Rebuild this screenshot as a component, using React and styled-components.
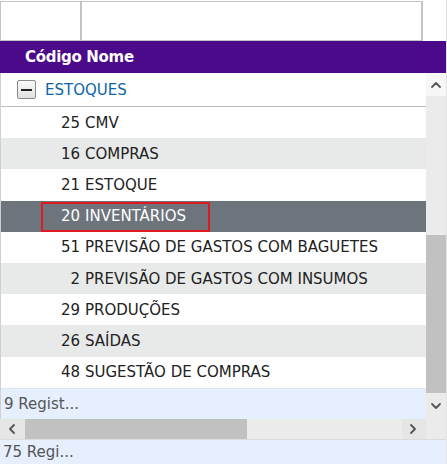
import React from "react";
import styled, { createGlobalStyle } from "styled-components";

const Global = createGlobalStyle`
  html, body { margin: 0; padding: 0; background: #fff; }
  body { font-family: "DejaVu Sans", "Liberation Sans", sans-serif; }
`;

const Grid = styled.div`
  width: 447px;
  height: 464px;
  display: flex;
  flex-direction: column;
  overflow: hidden;
  box-sizing: border-box;
  border-right: 1px solid #e2e2e2;
`;

const FilterRow = styled.div`
  height: 41px;
  flex: none;
  display: flex;
  box-sizing: border-box;
  padding-top: 1px;
`;

const FilterCell = styled.div`
  width: ${(p) => p.$w}px;
  box-sizing: border-box;
  border: 1px solid #c4c4c4;
  border-left: ${(p) => (p.$first ? "1px solid #c4c4c4" : "none")};
  border-right-width: 2px;
  background: #fff;
`;

const ColumnBar = styled.div`
  height: 32px;
  flex: none;
  background: #4a0a8a;
  color: #fff;
  display: flex;
  align-items: center;
  padding-left: 25px;
  font-size: 15px;
  font-weight: 600;
  letter-spacing: -0.3px;
`;

const Body = styled.div`
  height: 346px;
  flex: none;
  display: flex;
`;

const Main = styled.div`
  flex: 1;
  display: flex;
  flex-direction: column;
  border-left: 1px solid #d0d0d0;
`;

const GroupRow = styled.div`
  height: 34px;
  flex: none;
  display: flex;
  align-items: center;
  padding-left: 16px;
  gap: 9px;
  border-bottom: 1px solid #bdbdbd;
  box-sizing: border-box;
  color: #0d66a6;
  font-size: 15px;
`;

const Toggle = styled.span`
  width: 19px;
  height: 19px;
  box-sizing: border-box;
  border: 1px solid #8a8a8a;
  border-radius: 2px;
  background: linear-gradient(#fafafa, #e0e0e0);
  display: flex;
  align-items: center;
  justify-content: center;
  &::after {
    content: "";
    width: 11px;
    height: 2px;
    background: #222;
  }
`;

const Row = styled.div`
  height: 31.2px;
  flex: none;
  display: flex;
  align-items: center;
  font-size: 15px;
  color: ${(p) => (p.$selected ? "#fff" : "#222")};
  background: ${(p) => (p.$selected ? "#6d747c" : p.$alt ? "#e8e9e9" : "#fff")};
  position: relative;
`;

const Focus = styled.span`
  position: absolute;
  left: 40px;
  top: 1px;
  width: 169px;
  bottom: 0;
  border: 2px solid #e01a22;
  box-sizing: border-box;
  pointer-events: none;
`;

const Code = styled.span`
  width: 79px;
  text-align: right;
  box-sizing: border-box;
`;

const Name = styled.span`
  padding-left: 5px;
  white-space: nowrap;
`;

const Summary = styled.div`
  height: 32px;
  flex: none;
  background: #e6effd;
  color: #555;
  font-size: 15px;
  display: flex;
  align-items: center;
  padding-left: 3px;
  margin-top: auto;
  border-top: 1px solid #dfe6ef;
  box-sizing: border-box;
`;

const VScroll = styled.div`
  width: 20px;
  flex: none;
  display: flex;
  flex-direction: column;
  background: #ebebeb;
`;

const ArrowBtn = styled.div`
  height: ${(p) => p.$h}px;
  width: ${(p) => p.$w || 20}px;
  flex: none;
  display: flex;
  align-items: center;
  justify-content: center;
  background: ${(p) => p.$bg || "#ebebeb"};
`;

const Track = styled.div`
  flex: 1;
  display: flex;
  flex-direction: column;
`;

const Thumb = styled.div`
  background: #c1c1c1;
`;

const HScroll = styled.div`
  height: 20px;
  flex: none;
  display: flex;
  background: #ececec;
  border-bottom: 1px solid #dcdcdc;
`;

const HTrack = styled.div`
  flex: 1;
  display: flex;
`;

const Total = styled.div`
  flex: 1;
  background: #e6effd;
  color: #555;
  font-size: 15px;
  display: flex;
  align-items: center;
  padding-left: 3px;
`;

const Chevron = ({ dir }) => {
  const pts = {
    up: "2,7 6,3 10,7",
    down: "2,3 6,7 10,3",
    left: "7,1 3,5 7,9",
    right: "3,1 7,5 3,9",
  }[dir];
  return (
    <svg width="12" height="10" viewBox="0 0 12 10" style={{ overflow: "visible" }}>
      <polyline points={pts} fill="none" stroke="#555" strokeWidth="1.8" strokeLinecap="round" strokeLinejoin="round" />
    </svg>
  );
};

const items = [
  ["25", "CMV"],
  ["16", "COMPRAS"],
  ["21", "ESTOQUE"],
  ["20", "INVENTÁRIOS"],
  ["51", "PREVISÃO DE GASTOS COM BAGUETES"],
  ["2", "PREVISÃO DE GASTOS COM INSUMOS"],
  ["29", "PRODUÇÕES"],
  ["26", "SAÍDAS"],
  ["48", "SUGESTÃO DE COMPRAS"],
];

export default function App() {
  return (
    <>
      <Global />
      <Grid>
        <FilterRow>
          <FilterCell $w={82} $first />
          <FilterCell $w={341} />
        </FilterRow>
        <ColumnBar>Código Nome</ColumnBar>
        <Body>
          <Main>
            <GroupRow>
              <Toggle />
              ESTOQUES
            </GroupRow>
            {items.map(([code, name], i) => (
              <Row key={code} $alt={i % 2 === 1} $selected={i === 3}>
                <Code>{code}</Code>
                <Name>{name}</Name>
                {i === 3 && <Focus />}
              </Row>
            ))}
            <Summary>9 Regist...</Summary>
          </Main>
          <VScroll>
            <ArrowBtn $h={23} $bg="#f7f7f7">
              <Chevron dir="up" />
            </ArrowBtn>
            <Track>
              <div style={{ flex: 139 }} />
              <Thumb style={{ flex: 158 }} />
            </Track>
            <ArrowBtn $h={26}>
              <Chevron dir="down" />
            </ArrowBtn>
          </VScroll>
        </Body>
        <HScroll>
          <ArrowBtn $h={20} $w={25} $bg="#e6e6e6">
            <Chevron dir="left" />
          </ArrowBtn>
          <HTrack>
            <Thumb style={{ width: 222 }} />
          </HTrack>
          <ArrowBtn $h={20} $w={24} $bg="#e6e6e6">
            <Chevron dir="right" />
          </ArrowBtn>
          <ArrowBtn $h={20} $w={20} />
        </HScroll>
        <Total>75 Regi...</Total>
      </Grid>
    </>
  );
}
